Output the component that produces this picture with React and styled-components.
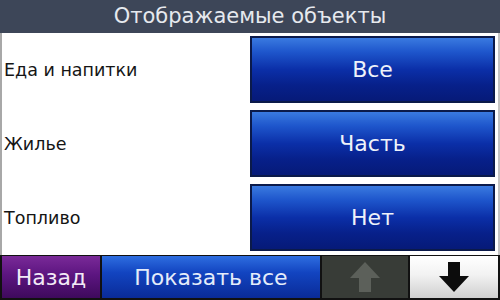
import React from "react";
import styled, { createGlobalStyle } from "styled-components";

const GlobalStyle = createGlobalStyle`
  html, body {
    margin: 0;
    padding: 0;
    background: #ffffff;
  }
  * {
    box-sizing: border-box;
  }
`;

const Screen = styled.div`
  width: 500px;
  height: 300px;
  display: flex;
  flex-direction: column;
  font-family: "DejaVu Sans", "Liberation Sans", sans-serif;
  overflow: hidden;
`;

const Header = styled.div`
  height: 34px;
  background: #3d4658;
  color: #e6e9ee;
  font-size: 21px;
  display: flex;
  align-items: center;
  justify-content: center;
  padding-bottom: 1px;
`;

const List = styled.div`
  flex: 1;
  display: flex;
  flex-direction: column;
  gap: 7px;
  padding: 3px 3px 4px 0;
  background: #fff;
  border-left: 2px solid #a8a8a8;
  border-right: 2px solid #c4c4c4;
`;

const Row = styled.div`
  height: 67px;
  display: grid;
  grid-template-columns: 1fr 245px;
  align-items: center;
`;

const Label = styled.div`
  font-size: 17.5px;
  color: #151515;
  padding-left: 2px;
`;

const BlueButton = styled.button`
  height: 100%;
  border: 2px solid #0b1a4a;
  background: linear-gradient(
    to bottom,
    #3a7ae0 0%,
    #1e56cc 22%,
    #0b2fa8 50%,
    #07208a 75%,
    #061a78 100%
  );
  color: #eef2fa;
  font-family: inherit;
  font-size: 22px;
  padding: 0;
`;

const BottomBar = styled.div`
  height: 46px;
  background: #111;
  display: grid;
  grid-template-columns: 98px 218px 86px 88px;
  gap: 2px;
  padding: 1px 3px 2px 2px;
`;

const BarButton = styled.button`
  border: none;
  padding: 0;
  font-family: inherit;
  font-size: 22px;
  color: ${(p) => p.$fg || "#f2eaf6"};
  background: ${(p) => p.$bg};
  display: flex;
  align-items: center;
  justify-content: center;
`;

const purple = "linear-gradient(to bottom, #7a2a98 0%, #5c1580 45%, #3e0a5c 100%)";
const blue = "linear-gradient(to bottom, #2e6ee0 0%, #1244c0 40%, #0a2b98 100%)";
const darkGrey = "#383c37";
const light = "linear-gradient(to bottom, #ffffff 0%, #f2f2f2 45%, #cfcfcf 100%)";

const Arrow = ({ color, down }) => (
  <svg width="34" height="34" viewBox="0 0 34 34">
    <path
      d="M11 2 H23 V16 H32 L17 32 L2 16 H11 Z"
      fill={color}
      transform={down ? undefined : "rotate(180 17 17)"}
    />
  </svg>
);

const rows = [
  { label: "Еда и напитки", value: "Все" },
  { label: "Жилье", value: "Часть" },
  { label: "Топливо", value: "Нет" },
];

export default function App() {
  return (
    <>
      <GlobalStyle />
      <Screen>
        <Header>Отображаемые объекты</Header>
        <List>
          {rows.map((r) => (
            <Row key={r.label}>
              <Label>{r.label}</Label>
              <BlueButton>{r.value}</BlueButton>
            </Row>
          ))}
        </List>
        <BottomBar>
          <BarButton $bg={purple}>Назад</BarButton>
          <BarButton $bg={blue} $fg="#e4ecfa">Показать все</BarButton>
          <BarButton $bg={darkGrey}>
            <Arrow color="#5c605a" />
          </BarButton>
          <BarButton $bg={light}>
            <Arrow color="#0c0c0c" down />
          </BarButton>
        </BottomBar>
      </Screen>
    </>
  );
}
